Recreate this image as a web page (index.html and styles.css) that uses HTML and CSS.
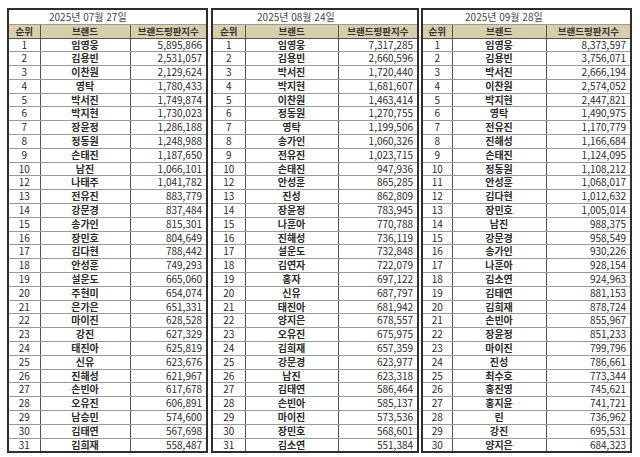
FILE: index.html
```html
<!DOCTYPE html>
<html lang="ko">
<head>
<meta charset="utf-8">
<title>브랜드평판지수</title>
<link rel="stylesheet" href="styles.css">
</head>
<body>
<div class="wrap">
<table class="rank t1">
<colgroup><col class="c-rank"><col class="c-brand"><col class="c-score"></colgroup>
<tr class="date-row"><td colspan="3">2025년 07월 27일</td></tr>
<tr class="head"><th>순위</th><th>브랜드</th><th>브랜드평판지수</th></tr>
<tr><td>1</td><td>임영웅</td><td>5,895,866</td></tr>
<tr><td>2</td><td>김용빈</td><td>2,531,057</td></tr>
<tr><td>3</td><td>이찬원</td><td>2,129,624</td></tr>
<tr><td>4</td><td>영탁</td><td>1,780,433</td></tr>
<tr><td>5</td><td>박서진</td><td>1,749,874</td></tr>
<tr><td>6</td><td>박지현</td><td>1,730,023</td></tr>
<tr><td>7</td><td>장윤정</td><td>1,286,188</td></tr>
<tr><td>8</td><td>정동원</td><td>1,248,988</td></tr>
<tr><td>9</td><td>손태진</td><td>1,187,650</td></tr>
<tr><td>10</td><td>남진</td><td>1,066,101</td></tr>
<tr><td>12</td><td>나태주</td><td>1,041,782</td></tr>
<tr><td>13</td><td>전유진</td><td>883,779</td></tr>
<tr><td>14</td><td>강문경</td><td>837,484</td></tr>
<tr><td>15</td><td>송가인</td><td>815,301</td></tr>
<tr><td>16</td><td>장민호</td><td>804,649</td></tr>
<tr><td>17</td><td>김다현</td><td>788,442</td></tr>
<tr><td>18</td><td>안성훈</td><td>749,293</td></tr>
<tr><td>19</td><td>설운도</td><td>665,060</td></tr>
<tr><td>20</td><td>주현미</td><td>654,074</td></tr>
<tr><td>21</td><td>은가은</td><td>651,331</td></tr>
<tr><td>22</td><td>마이진</td><td>628,528</td></tr>
<tr><td>23</td><td>강진</td><td>627,329</td></tr>
<tr><td>24</td><td>태진아</td><td>625,819</td></tr>
<tr><td>25</td><td>신유</td><td>623,676</td></tr>
<tr><td>26</td><td>진해성</td><td>621,967</td></tr>
<tr><td>27</td><td>손빈아</td><td>617,678</td></tr>
<tr><td>28</td><td>오유진</td><td>606,891</td></tr>
<tr><td>29</td><td>남승민</td><td>574,600</td></tr>
<tr><td>30</td><td>김태연</td><td>567,698</td></tr>
<tr><td>31</td><td>김희재</td><td>558,487</td></tr>
</table>

<table class="rank t2">
<colgroup><col class="c-rank"><col class="c-brand"><col class="c-score"></colgroup>
<tr class="date-row"><td colspan="3">2025년 08월 24일</td></tr>
<tr class="head"><th>순위</th><th>브랜드</th><th>브랜드평판지수</th></tr>
<tr><td>1</td><td>임영웅</td><td>7,317,285</td></tr>
<tr><td>2</td><td>김용빈</td><td>2,660,596</td></tr>
<tr><td>3</td><td>박서진</td><td>1,720,440</td></tr>
<tr><td>4</td><td>박지현</td><td>1,681,607</td></tr>
<tr><td>5</td><td>이찬원</td><td>1,463,414</td></tr>
<tr><td>6</td><td>정동원</td><td>1,270,755</td></tr>
<tr><td>7</td><td>영탁</td><td>1,199,506</td></tr>
<tr><td>8</td><td>송가인</td><td>1,060,326</td></tr>
<tr><td>9</td><td>전유진</td><td>1,023,715</td></tr>
<tr><td>10</td><td>손태진</td><td>947,936</td></tr>
<tr><td>12</td><td>안성훈</td><td>865,285</td></tr>
<tr><td>13</td><td>진성</td><td>862,809</td></tr>
<tr><td>14</td><td>장윤정</td><td>783,945</td></tr>
<tr><td>15</td><td>나훈아</td><td>770,788</td></tr>
<tr><td>16</td><td>진해성</td><td>736,119</td></tr>
<tr><td>17</td><td>설운도</td><td>732,848</td></tr>
<tr><td>18</td><td>김연자</td><td>722,079</td></tr>
<tr><td>19</td><td>홍자</td><td>697,122</td></tr>
<tr><td>20</td><td>신유</td><td>687,797</td></tr>
<tr><td>21</td><td>태진아</td><td>681,942</td></tr>
<tr><td>22</td><td>양지은</td><td>678,557</td></tr>
<tr><td>23</td><td>오유진</td><td>675,975</td></tr>
<tr><td>24</td><td>김희재</td><td>657,359</td></tr>
<tr><td>25</td><td>강문경</td><td>623,977</td></tr>
<tr><td>26</td><td>남진</td><td>623,318</td></tr>
<tr><td>27</td><td>김태연</td><td>586,464</td></tr>
<tr><td>28</td><td>손빈아</td><td>585,137</td></tr>
<tr><td>29</td><td>마이진</td><td>573,536</td></tr>
<tr><td>30</td><td>장민호</td><td>568,601</td></tr>
<tr><td>31</td><td>김소연</td><td>551,384</td></tr>
</table>

<table class="rank t3">
<colgroup><col class="c-rank"><col class="c-brand"><col class="c-score"></colgroup>
<tr class="date-row"><td colspan="3">2025년 09월 28일</td></tr>
<tr class="head"><th>순위</th><th>브랜드</th><th>브랜드평판지수</th></tr>
<tr><td>1</td><td>임영웅</td><td>8,373,597</td></tr>
<tr><td>2</td><td>김용빈</td><td>3,756,071</td></tr>
<tr><td>3</td><td>박서진</td><td>2,666,194</td></tr>
<tr><td>4</td><td>이찬원</td><td>2,574,052</td></tr>
<tr><td>5</td><td>박지현</td><td>2,447,821</td></tr>
<tr><td>6</td><td>영탁</td><td>1,490,975</td></tr>
<tr><td>7</td><td>전유진</td><td>1,170,779</td></tr>
<tr><td>8</td><td>진해성</td><td>1,166,684</td></tr>
<tr><td>9</td><td>손태진</td><td>1,124,095</td></tr>
<tr><td>10</td><td>정동원</td><td>1,108,212</td></tr>
<tr><td>11</td><td>안성훈</td><td>1,068,017</td></tr>
<tr><td>12</td><td>김다현</td><td>1,012,632</td></tr>
<tr><td>13</td><td>장민호</td><td>1,005,014</td></tr>
<tr><td>14</td><td>남진</td><td>988,375</td></tr>
<tr><td>15</td><td>강문경</td><td>958,549</td></tr>
<tr><td>16</td><td>송가인</td><td>930,226</td></tr>
<tr><td>17</td><td>나훈아</td><td>928,154</td></tr>
<tr><td>18</td><td>김소연</td><td>924,963</td></tr>
<tr><td>19</td><td>김태연</td><td>881,153</td></tr>
<tr><td>20</td><td>김희재</td><td>878,724</td></tr>
<tr><td>21</td><td>손빈아</td><td>855,967</td></tr>
<tr><td>22</td><td>장윤정</td><td>851,233</td></tr>
<tr><td>23</td><td>마이진</td><td>799,796</td></tr>
<tr><td>24</td><td>진성</td><td>786,661</td></tr>
<tr><td>25</td><td>최수호</td><td>773,344</td></tr>
<tr><td>26</td><td>홍진영</td><td>745,621</td></tr>
<tr><td>27</td><td>홍지윤</td><td>741,721</td></tr>
<tr><td>28</td><td>린</td><td>736,962</td></tr>
<tr><td>29</td><td>강진</td><td>695,531</td></tr>
<tr><td>30</td><td>양지은</td><td>684,323</td></tr>
</table>
</div>
</body>
</html>
```

FILE: styles.css
```css
html, body {
  margin: 0;
  padding: 0;
  background: #ffffff;
}

.wrap {
  display: flex;
  align-items: flex-start;
  padding: 8px 0 0 7px;
  gap: 3px;
}

.rank {
  border-collapse: collapse;
  table-layout: fixed;
  border: 2px solid #2e2e2e;
  font-family: "Noto Sans CJK KR", "Noto Sans", sans-serif;
  font-size: 10px;
  color: #2a2a2a;
}

.rank td,
.rank th {
  padding: 0;
  height: 12.8px;
  line-height: 12.8px;
  border: 1px solid #9a9a9a;
  white-space: nowrap;
  overflow: hidden;
}

.rank td:nth-child(1) {
  text-align: center;
  border-right-color: #555;
}

.rank td:nth-child(2) {
  text-align: center;
  font-weight: bold;
  border-right-color: #555;
}

.rank td:nth-child(3) {
  text-align: right;
  padding-right: 4px;
}

.rank .date-row td {
  height: 14px;
  line-height: 14px;
  text-align: left;
  font-weight: normal;
  color: #444;
  padding-right: 0;
}

.rank .head th {
  height: 12.5px;
  line-height: 12.5px;
  font-size: 9.5px;
  background: #d7ceac;
  color: #333;
  font-weight: bold;
  text-align: center;
  border-bottom-color: #555;
  border-right-color: #555;
}

.t1 { width: 199px; }
.t1 .c-rank { width: 32px; }
.t1 .c-brand { width: 90px; }
.t1 .c-score { width: 77px; }
.t1 .date-row td { padding-left: 40px; }

.t2 { width: 206px; }
.t2 .c-rank { width: 33px; }
.t2 .c-brand { width: 93px; }
.t2 .c-score { width: 80px; }
.t2 .date-row td { padding-left: 44px; }

.t3 { width: 209px; margin-left: -1px; }
.t3 .c-rank { width: 30px; }
.t3 .c-brand { width: 94px; }
.t3 .c-score { width: 85px; }
.t3 .date-row td { padding-left: 42px; }
```
